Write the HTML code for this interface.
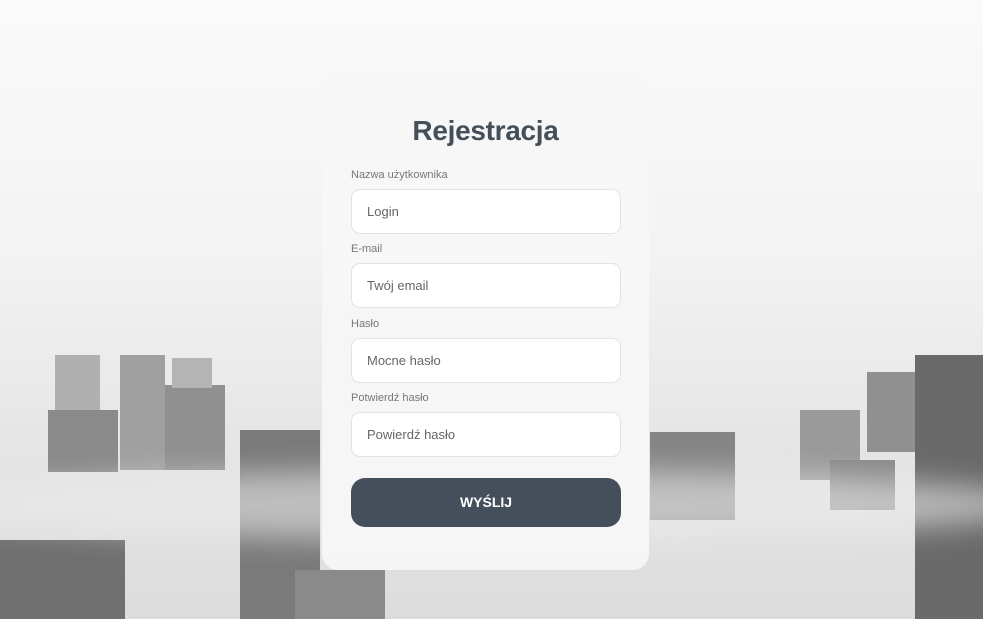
<!DOCTYPE html>
<html><head><meta charset="utf-8"><style>
*{box-sizing:border-box;margin:0;padding:0}
body{width:983px;height:619px;overflow:hidden;position:relative;font-family:"Liberation Sans",sans-serif;background:linear-gradient(#fafafa 0%,#f3f3f3 40%,#e6e6e6 70%,#dcdcdc 100%)}
.b{position:absolute;background:#8a8a8a}
.fog{position:absolute;left:0;right:0;border-radius:50%;background:rgba(235,235,235,.6);filter:blur(14px)}
.card{position:absolute;left:322px;top:75px;width:327px;height:495px;background:rgba(246,247,247,.94);border-radius:16px}
h1{position:absolute;top:40px;width:100%;text-align:center;font-size:28px;font-weight:bold;color:#444f5a;font-family:"Liberation Sans",sans-serif;letter-spacing:-0.3px}
label{position:absolute;left:29px;font-size:11px;color:#777}
.in{position:absolute;left:29px;width:270px;height:45px;background:#fff;border:1px solid #e3e3e3;border-radius:9px;padding-left:15px;line-height:43px;font-size:13px;color:#666}
.btn{position:absolute;left:29px;top:403px;width:270px;height:49px;background:#444f5b;border-radius:14px;color:#fff;font-weight:bold;font-size:14px;text-align:center;line-height:49px}
</style></head><body>
<div class="b" style="left:55px;top:355px;width:45px;height:60px;background:#b0b0b0"></div>
<div class="b" style="left:48px;top:410px;width:70px;height:62px;background:#8a8a8a"></div>
<div class="b" style="left:120px;top:355px;width:45px;height:115px;background:#a0a0a0"></div>
<div class="b" style="left:165px;top:385px;width:60px;height:85px;background:#909090"></div>
<div class="b" style="left:172px;top:358px;width:40px;height:30px;background:#b4b4b4"></div>
<div class="b" style="left:240px;top:430px;width:80px;height:189px;background:#7a7a7a"></div>
<div class="b" style="left:0;top:540px;width:125px;height:79px;background:#707070"></div>
<div class="b" style="left:295px;top:570px;width:90px;height:49px;background:#8a8a8a"></div>
<div class="b" style="left:650px;top:432px;width:85px;height:88px;background:#858585"></div>
<div class="b" style="left:800px;top:410px;width:60px;height:70px;background:#9a9a9a"></div>
<div class="b" style="left:830px;top:460px;width:65px;height:50px;background:#8a8a8a"></div>
<div class="b" style="left:867px;top:372px;width:93px;height:80px;background:#909090"></div>
<div class="b" style="left:915px;top:355px;width:68px;height:264px;background:#6a6a6a"></div>
<div class="fog" style="top:470px;height:70px;left:-60px;right:-60px"></div>
<div class="card">
<h1>Rejestracja</h1>
<label style="top:94px">Nazwa użytkownika</label>
<div class="in" style="top:114px">Login</div>
<label style="top:168px">E-mail</label>
<div class="in" style="top:188px">Twój email</div>
<label style="top:243px">Hasło</label>
<div class="in" style="top:263px">Mocne hasło</div>
<label style="top:317px">Potwierdź hasło</label>
<div class="in" style="top:337px">Powierdź hasło</div>
<div class="btn">WYŚLIJ</div>
</div>
</body></html>
